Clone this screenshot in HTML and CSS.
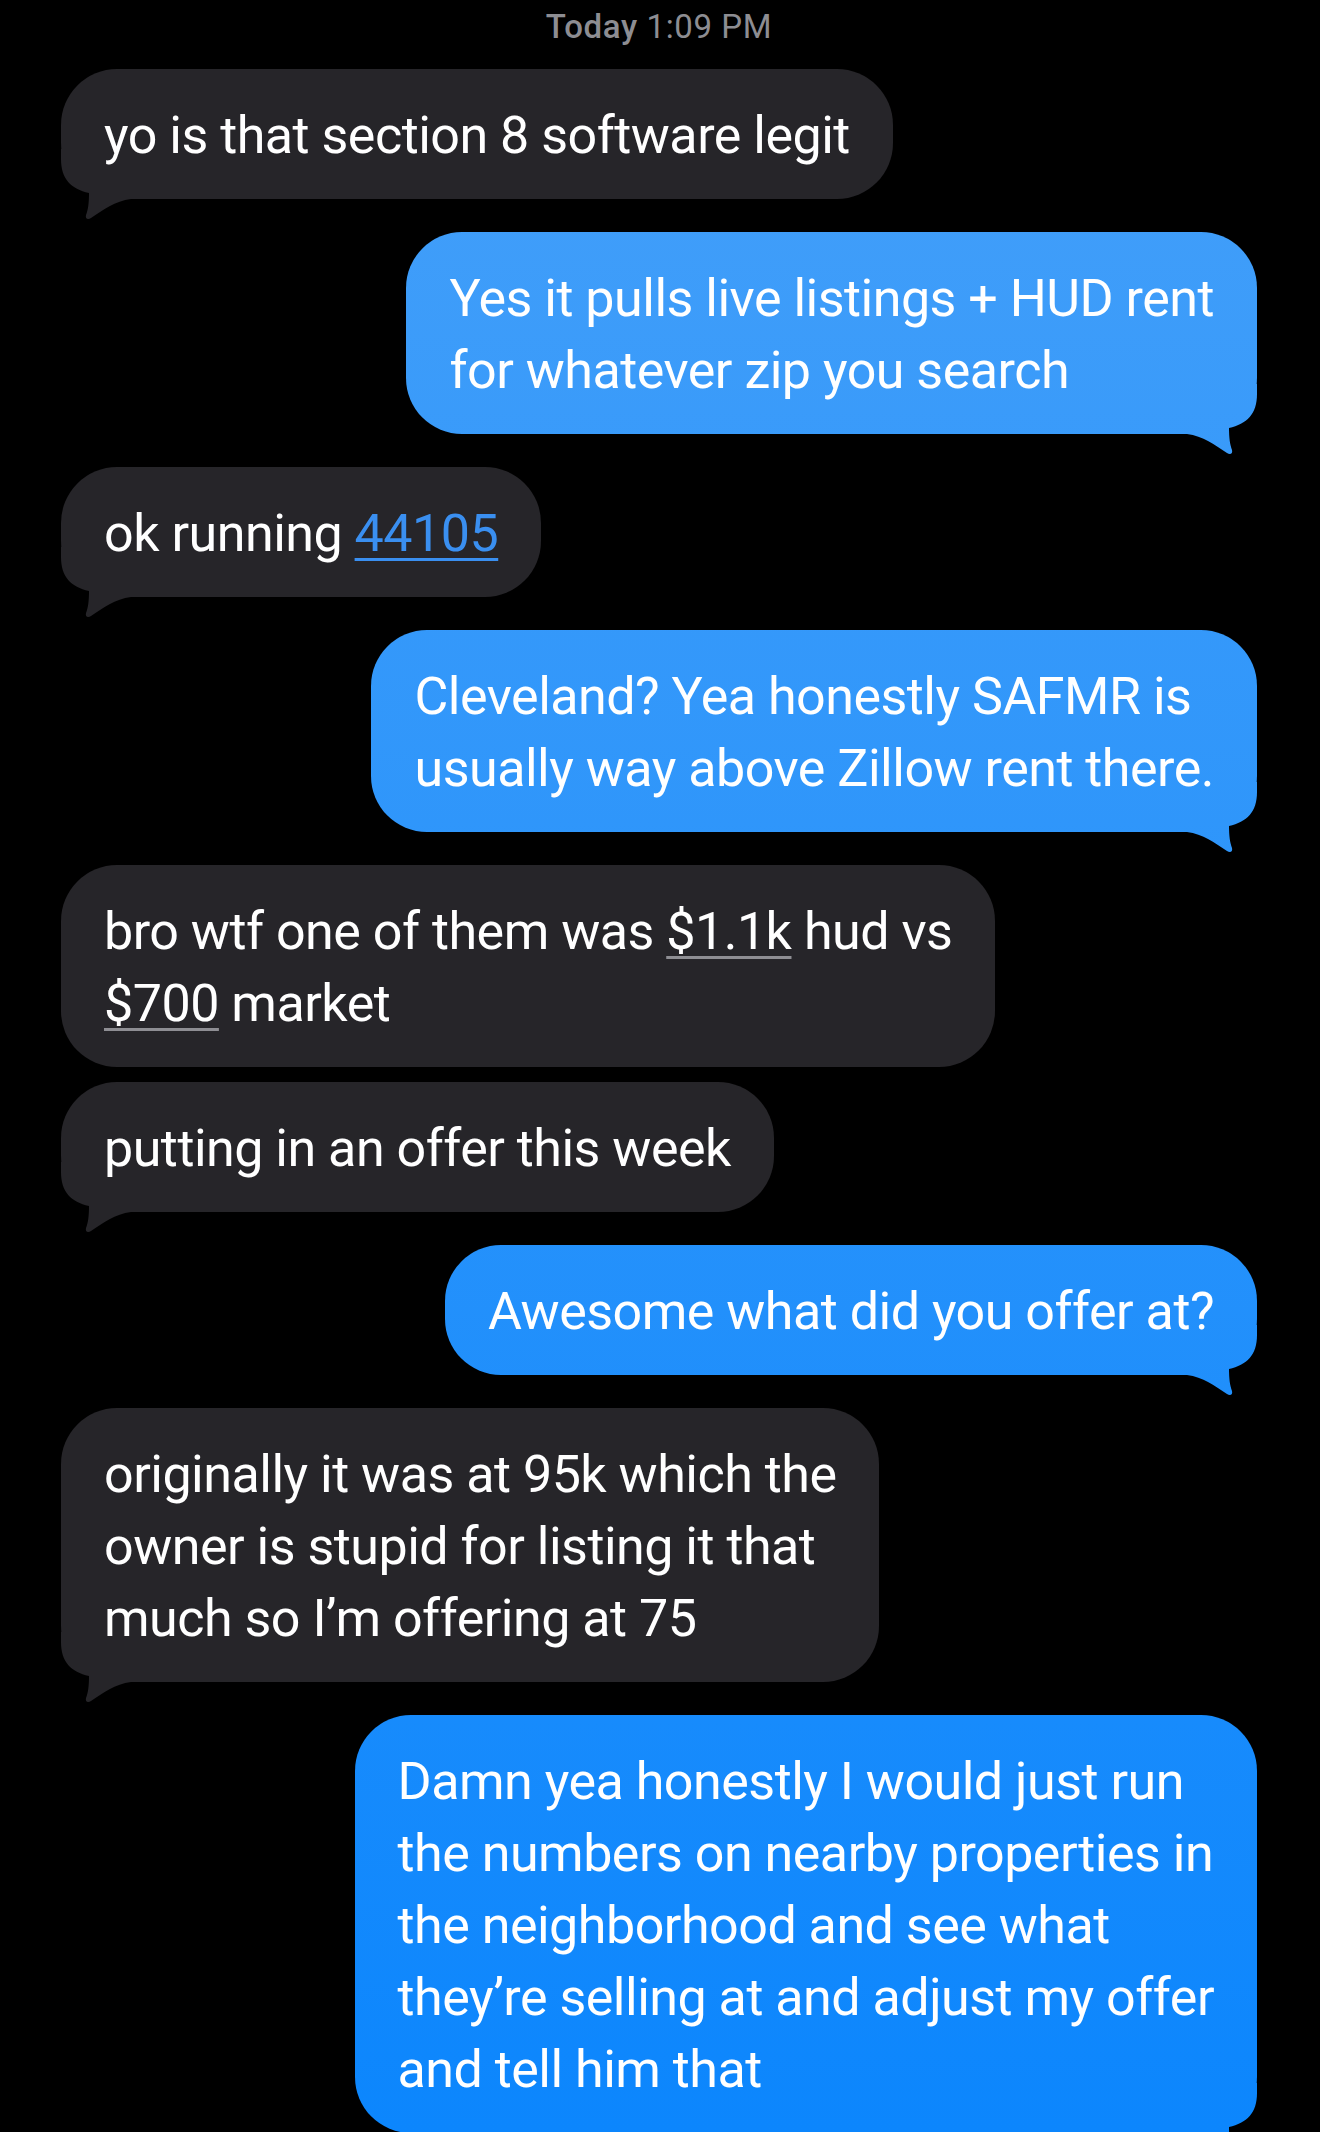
FILE: index.html
```html
<!DOCTYPE html>
<html lang="en">

<head>
    <meta charset="UTF-8">
    <meta name="viewport" content="width=device-width, initial-scale=1.0">
    <title>Messages</title>
    <link rel="stylesheet" href="styles.css">
</head>

<body>
    <div class="chat">
        <p class="stamp"><b>Today</b> 1:09 PM</p>

        <div class="msg in tail">yo is that section 8 software legit</div>

        <div class="msg out tail">Yes it pulls live listings + HUD rent<br>for whatever zip you search</div>

        <div class="msg in tail">ok running <a class="link">44105</a></div>

        <div class="msg out tail">Cleveland? Yea honestly SAFMR is<br>usually way above Zillow rent there.</div>

        <div class="msg in">bro wtf one of them was <span class="data">$1.1k</span> hud vs<br><span class="data">$700</span> market</div>
        <div class="msg in tail close">putting in an offer this week</div>

        <div class="msg out tail">Awesome what did you offer at?</div>

        <div class="msg in tail">originally it was at 95k which the<br>owner is stupid for listing it that<br>much so I’m offering at 75</div>

        <div class="msg out tail">Damn yea honestly I would just run<br>the numbers on nearby properties in<br>the neighborhood and see what<br>they’re selling at and adjust my offer<br>and tell him that</div>
    </div>
</body>

</html>
```

FILE: styles.css
```css
html,
body {
    margin: 0;
    height: 2132px;
    overflow: hidden;
    background: #000;
}

.chat {
    display: flex;
    flex-direction: column;
    padding: 12px 63px 0 61px;
    font-family: Roboto, "Noto Sans", sans-serif;
}

.stamp {
    margin: 0 0 27px;
    font-size: 33px;
    line-height: 30px;
    letter-spacing: 0.6px;
    text-align: center;
    color: #8d8d92;
}

.stamp b {
    font-weight: 500;
}

.msg {
    position: relative;
    z-index: 0;
    padding: 31px 43px 27px;
    border-radius: 56px;
    font-size: 52px;
    line-height: 72px;
    letter-spacing: -0.5px;
    color: #fff;
    white-space: nowrap;
}

.msg + .msg {
    margin-top: 33px;
}

.msg.close {
    margin-top: 15px;
}

.in {
    align-self: flex-start;
    background: #262529;
}

.out {
    align-self: flex-end;
    /* ios tints the sent bubbles by screen position */
    background: linear-gradient(to bottom, #45a0f9, #0c86fd) fixed;
}

/* tail sits under the text, over the bubble corner */
.tail::after {
    content: "";
    position: absolute;
    z-index: -1;
    bottom: -20px;
    width: 70px;
    height: 70px;
    background: inherit;
}

.in.tail::after {
    left: 0;
    clip-path: path("M0 0 L0 10 C0 30 10 40 28 44 C28 54 27 61 25 66 C24 70 27 71 30 69 C42 61 54 52 70 50 L70 0 Z");
}

.out.tail::after {
    right: 0;
    background: linear-gradient(to bottom, #45a0f9, #0c86fd) fixed;
    clip-path: path("M70 0 L70 10 C70 30 60 40 42 44 C42 54 43 61 45 66 C46 70 43 71 40 69 C28 61 16 52 0 50 L0 0 Z");
}

.link {
    color: #3a8ff0;
    text-decoration: underline;
    text-decoration-thickness: 3px;
    text-underline-offset: 7px;
}

.data {
    text-decoration: underline;
    text-decoration-color: #8e8e93;
    text-decoration-thickness: 3px;
    text-underline-offset: 7px;
}
```
